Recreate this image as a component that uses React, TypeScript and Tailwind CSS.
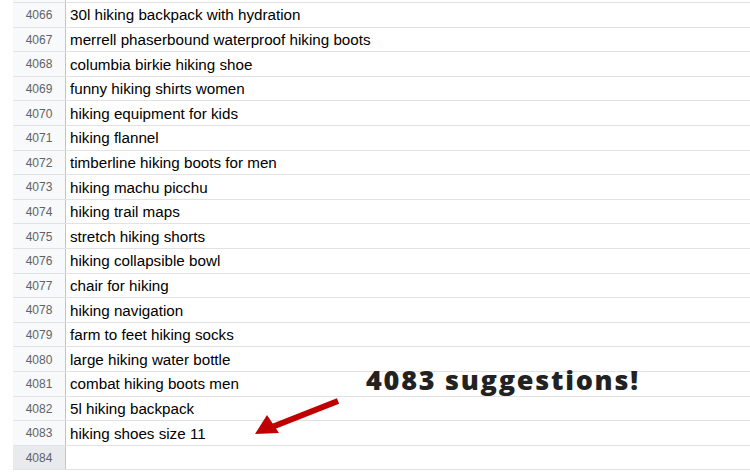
const rows: [number, string][] = [
  [4066, "30l hiking backpack with hydration"],
  [4067, "merrell phaserbound waterproof hiking boots"],
  [4068, "columbia birkie hiking shoe"],
  [4069, "funny hiking shirts women"],
  [4070, "hiking equipment for kids"],
  [4071, "hiking flannel"],
  [4072, "timberline hiking boots for men"],
  [4073, "hiking machu picchu"],
  [4074, "hiking trail maps"],
  [4075, "stretch hiking shorts"],
  [4076, "hiking collapsible bowl"],
  [4077, "chair for hiking"],
  [4078, "hiking navigation"],
  [4079, "farm to feet hiking socks"],
  [4080, "large hiking water bottle"],
  [4081, "combat hiking boots men"],
  [4082, "5l hiking backpack"],
  [4083, "hiking shoes size 11"],
  [4084, ""],
];

export default function App() {
  return (
    <div className="relative w-[750px] h-[472px] overflow-hidden bg-white pl-[13px] font-['Liberation_Sans',Arial,sans-serif]">
      {/* partial row above */}
      <div className="flex h-[3px] border-b border-[#e2e2e2]">
        <div className="w-[53px] shrink-0 bg-[#f8f9fa] border-r border-[#c4c4c4]" />
        <div className="flex-1" />
      </div>

      {rows.map(([num, text]) => (
        <div key={num} className="flex h-[24.6px] border-b border-[#e2e2e2]">
          <div
            className={
              num === 4084
                ? "w-[53px] shrink-0 bg-[#e8eaed] border-r border-[#c4c4c4] flex items-center justify-center pt-[1px] text-[12px] text-[#5f6368]"
                : "w-[53px] shrink-0 bg-[#f8f9fa] border-r border-[#c4c4c4] flex items-center justify-center pt-[1px] text-[12px] text-[#5f6368]"
            }
          >
            {num}
          </div>
          <div className="flex-1 flex items-center pl-[4px] pt-[2px] text-[15.2px] text-black whitespace-nowrap">
            {text}
          </div>
        </div>
      ))}

      {/* annotation */}
      <div className="absolute left-[366px] top-[366px] text-[27px] leading-none font-extrabold text-[#222] tracking-[1.75px] font-['Open_Sans',sans-serif] whitespace-nowrap">
        4083 suggestions!
      </div>
      <svg className="absolute left-[250px] top-[395px]" width="95" height="45" viewBox="0 0 95 45">
        <line x1="88" y1="6" x2="22" y2="32" stroke="#c00000" strokeWidth="6" />
        <polygon points="5,39 17,20 29,38" fill="#c00000" />
      </svg>
    </div>
  );
}
